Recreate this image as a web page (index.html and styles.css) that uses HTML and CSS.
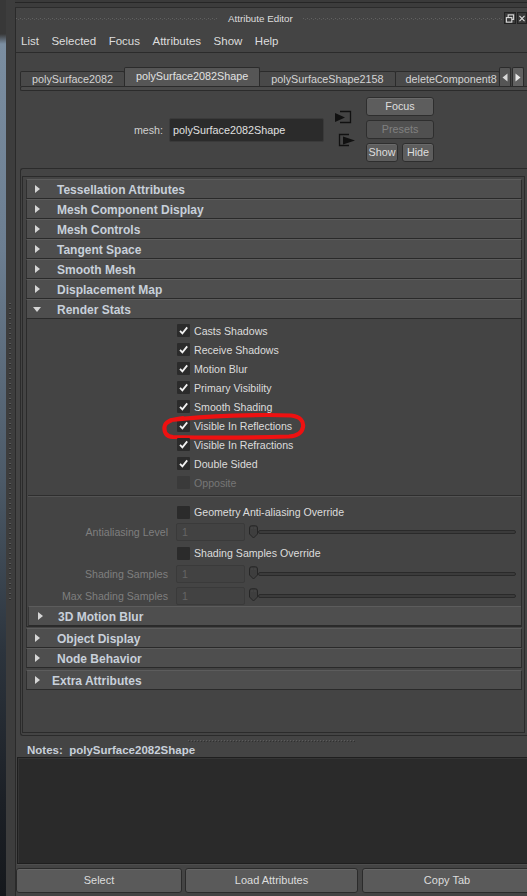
FILE: index.html
```html
<!DOCTYPE html>
<html>
<head>
<meta charset="utf-8">
<title>Attribute Editor</title>
<link rel="stylesheet" href="styles.css">
</head>
<body>
<div class="app">
  <div class="desk"></div>
  <div class="gutter"><div class="gutter-dots"></div></div>
  <div class="window">
    <div class="topedge"></div>
    <div class="titlebar">
      <div class="grip grip-left"></div>
      <div class="title">Attribute Editor</div>
      <div class="grip grip-right"></div>
      <div class="winbtn">
        <svg width="11" height="11" viewBox="0 0 11 11"><rect x="3.5" y="1.5" width="6" height="5" fill="none" stroke="#ddd" stroke-width="1.2"/><rect x="1.5" y="4.5" width="6" height="5" fill="#3a3a3a" stroke="#ddd" stroke-width="1.2"/></svg>
      </div>
      <div class="winbtn close">
        <svg width="11" height="11" viewBox="0 0 11 11"><path d="M2 2 L9 9 M9 2 L2 9" stroke="#ddd" stroke-width="1.5"/></svg>
      </div>
    </div>
    <div class="menubar">
      <span class="menu">List</span>
      <span class="menu">Selected</span>
      <span class="menu">Focus</span>
      <span class="menu">Attributes</span>
      <span class="menu">Show</span>
      <span class="menu">Help</span>
    </div>
    <div class="tabrow">
      <div class="tab">polySurface2082</div>
      <div class="tab active">polySurface2082Shape</div>
      <div class="tab">polySurfaceShape2158</div>
      <div class="tab clip">deleteComponent8</div>
      <div class="tabarrow">
        <svg width="6" height="9" viewBox="0 0 6 9"><path d="M5.5 0.5 L0.5 4.5 L5.5 8.5 Z" fill="#d8d8d8"/></svg>
      </div>
      <div class="tabarrow light">
        <svg width="6" height="9" viewBox="0 0 6 9"><path d="M0.5 0.5 L5.5 4.5 L0.5 8.5 Z" fill="#e8e8e8"/></svg>
      </div>
    </div>
    <div class="tabline"></div>
    <div class="nodebar">
      <div class="meshlabel">mesh:</div>
      <div class="meshfield">polySurface2082Shape</div>
      <svg class="nodeicons" width="22" height="38" viewBox="0 0 22 38">
        <path d="M6 1.5 H16.5 V12.5 H6" fill="none" stroke="#111" stroke-width="1.3"/>
        <path d="M1 3 L11 7.5 L1 12 Z" fill="#111"/>
        <path d="M15 24.5 H5.5 V35.5 H15" fill="none" stroke="#111" stroke-width="1.3"/>
        <path d="M9 26.5 L21 30.5 L9 34.5 Z" fill="#111"/>
      </svg>
      <div class="nodebtns">
        <div class="btn">Focus</div>
        <div class="btn disabled">Presets</div>
        <div class="btnpair">
          <div class="btn half">Show</div>
          <div class="btn half">Hide</div>
        </div>
      </div>
    </div>
    <div class="scrollouter">
      <div class="scrollinner">
        <div class="hdr"><span class="arrow"><span class="tri-r"></span></span>Tessellation Attributes</div>
        <div class="hdr"><span class="arrow"><span class="tri-r"></span></span>Mesh Component Display</div>
        <div class="hdr"><span class="arrow"><span class="tri-r"></span></span>Mesh Controls</div>
        <div class="hdr"><span class="arrow"><span class="tri-r"></span></span>Tangent Space</div>
        <div class="hdr"><span class="arrow"><span class="tri-r"></span></span>Smooth Mesh</div>
        <div class="hdr"><span class="arrow"><span class="tri-r"></span></span>Displacement Map</div>
        <div class="hdr"><span class="arrow down"><span class="tri-d"></span></span>Render Stats</div>
        <div class="rsbody">
          <div class="cbgroup">
            <div class="cb"><span class="box"><svg width="13" height="13" viewBox="0 0 13 13"><path d="M3 6.8 L5.4 9.3 L10.2 3.4" fill="none" stroke="#f2f2f2" stroke-width="1.8"/></svg></span>Casts Shadows</div>
            <div class="cb"><span class="box"><svg width="13" height="13" viewBox="0 0 13 13"><path d="M3 6.8 L5.4 9.3 L10.2 3.4" fill="none" stroke="#f2f2f2" stroke-width="1.8"/></svg></span>Receive Shadows</div>
            <div class="cb"><span class="box"><svg width="13" height="13" viewBox="0 0 13 13"><path d="M3 6.8 L5.4 9.3 L10.2 3.4" fill="none" stroke="#f2f2f2" stroke-width="1.8"/></svg></span>Motion Blur</div>
            <div class="cb"><span class="box"><svg width="13" height="13" viewBox="0 0 13 13"><path d="M3 6.8 L5.4 9.3 L10.2 3.4" fill="none" stroke="#f2f2f2" stroke-width="1.8"/></svg></span>Primary Visibility</div>
            <div class="cb"><span class="box"><svg width="13" height="13" viewBox="0 0 13 13"><path d="M3 6.8 L5.4 9.3 L10.2 3.4" fill="none" stroke="#f2f2f2" stroke-width="1.8"/></svg></span>Smooth Shading</div>
            <div class="cb circled"><span class="box"><svg width="13" height="13" viewBox="0 0 13 13"><path d="M3 6.8 L5.4 9.3 L10.2 3.4" fill="none" stroke="#f2f2f2" stroke-width="1.8"/></svg></span>Visible In Reflections
              <svg class="redmark" width="148" height="32" viewBox="0 0 148 32"><path d="M10 8 C 45 4, 100 2, 130 3.5 C 139 4.5, 143 9, 142 15 C 141 21, 137 24, 128 24.5 C 95 25.5, 45 26, 12 25 C 5 24.5, 3 20, 3.5 15 C 4 10, 9 7.5, 22 6" fill="none" stroke="#ee1111" stroke-width="4.2" stroke-linecap="round" stroke-linejoin="round"/></svg>
            </div>
            <div class="cb"><span class="box"><svg width="13" height="13" viewBox="0 0 13 13"><path d="M3 6.8 L5.4 9.3 L10.2 3.4" fill="none" stroke="#f2f2f2" stroke-width="1.8"/></svg></span>Visible In Refractions</div>
            <div class="cb"><span class="box"><svg width="13" height="13" viewBox="0 0 13 13"><path d="M3 6.8 L5.4 9.3 L10.2 3.4" fill="none" stroke="#f2f2f2" stroke-width="1.8"/></svg></span>Double Sided</div>
            <div class="cb off"><span class="box dim"></span>Opposite</div>
          </div>
          <div class="sep"></div>
          <div class="overrides">
            <div class="cb r20"><span class="box"></span>Geometry Anti-aliasing Override</div>
            <div class="srow r20">
              <div class="slabel">Antialiasing Level</div>
              <div class="sfield">1</div>
              <div class="slider"><svg class="handle" width="11" height="14" viewBox="0 0 11 14"><path d="M1.5 3 Q1.5 0.8 3.5 0.8 H7.5 Q9.5 0.8 9.5 3 V9 L5.5 13 L1.5 9 Z" fill="#3e3e3e" stroke="#262626" stroke-width="1"/><path d="M3.5 3 H4.5 M6.5 3 H7.5" stroke="#555" stroke-width="1"/></svg><div class="track"></div></div>
            </div>
            <div class="cb r20 mt1"><span class="box"></span>Shading Samples Override</div>
            <div class="srow r21">
              <div class="slabel">Shading Samples</div>
              <div class="sfield">1</div>
              <div class="slider"><svg class="handle" width="11" height="14" viewBox="0 0 11 14"><path d="M1.5 3 Q1.5 0.8 3.5 0.8 H7.5 Q9.5 0.8 9.5 3 V9 L5.5 13 L1.5 9 Z" fill="#3e3e3e" stroke="#262626" stroke-width="1"/><path d="M3.5 3 H4.5 M6.5 3 H7.5" stroke="#555" stroke-width="1"/></svg><div class="track"></div></div>
            </div>
            <div class="srow r21 mt1">
              <div class="slabel">Max Shading Samples</div>
              <div class="sfield">1</div>
              <div class="slider"><svg class="handle" width="11" height="14" viewBox="0 0 11 14"><path d="M1.5 3 Q1.5 0.8 3.5 0.8 H7.5 Q9.5 0.8 9.5 3 V9 L5.5 13 L1.5 9 Z" fill="#3e3e3e" stroke="#262626" stroke-width="1"/><path d="M3.5 3 H4.5 M6.5 3 H7.5" stroke="#555" stroke-width="1"/></svg><div class="track"></div></div>
            </div>
          </div>
          <div class="hdr sub"><span class="arrow sub"><span class="tri-r"></span></span>3D Motion Blur</div>
        </div>
        <div class="hdr mt1"><span class="arrow"><span class="tri-r"></span></span>Object Display</div>
        <div class="hdr"><span class="arrow"><span class="tri-r"></span></span>Node Behavior</div>
        <div class="hdr mt2"><span class="arrow extra"><span class="tri-r"></span></span>Extra Attributes</div>
      </div>
    </div>
    <div class="splitter"><div class="splitdots"></div></div>
    <div class="noteslabel">Notes:&nbsp; polySurface2082Shape</div>
    <div class="notes"></div>
    <div class="bottombar">
      <div class="bbtn b1">Select</div>
      <div class="bbtn b2">Load Attributes</div>
      <div class="bbtn b3">Copy Tab</div>
    </div>
  </div>
</div>
</body>
</html>
```

FILE: styles.css
```css
* { box-sizing: border-box; }
html, body { margin: 0; padding: 0; }
body {
  width: 527px;
  height: 896px;
  overflow: hidden;
  background: #444444;
  font-family: "Liberation Sans", Arial, sans-serif;
  color: #dddddd;
}
.app {
  display: flex;
  width: 527px;
  height: 896px;
  overflow: hidden;
}
.desk {
  width: 6px;
  flex: none;
  background: linear-gradient(to bottom, #383838 0, #383838 34px, #7b8ea1 44px, #6c7e91 250px, #4c5a68 480px, #2c343d 650px, #1c2026 800px, #15181c 896px);
}
.gutter {
  width: 9px;
  flex: none;
  background: #3d3d3d;
  padding-top: 303px;
}
.gutter-dots {
  margin-left: 3px;
  width: 2px;
  height: 300px;
  background: repeating-linear-gradient(to bottom, #5a5a5a 0 1px, #2c2c2c 1px 2px, transparent 2px 5px);
}
.window {
  flex: 1;
  min-width: 0;
  border-left: 1px solid #2a2a2a;
  display: flex;
  flex-direction: column;
  background: #444444;
}
.topedge {
  height: 8px;
  flex: none;
  background: #3c3c3c;
  border-top: 2px solid #3a3a3a;
  border-bottom: 1px solid #2c2c2c;
  box-shadow: inset 0 1px 0 #262626;
  margin-left: -1px;
}
.titlebar {
  height: 20px;
  flex: none;
  display: flex;
  align-items: center;
}
.grip {
  height: 2px;
  background-image:
    repeating-linear-gradient(90deg, #626262 0 1px, transparent 1px 4px),
    repeating-linear-gradient(90deg, transparent 0 2px, #5a5a5a 2px 3px, transparent 3px 4px);
  background-size: 100% 1px, 100% 1px;
  background-position: 0 0, 0 1px;
  background-repeat: no-repeat;
  margin-top: 1px;
}
.grip-left { width: 202px; }
.grip-right { flex: 1; }
.title {
  font-size: 9.8px;
  color: #dddddd;
  padding: 0 10px 0 10px;
  white-space: nowrap;
}
.winbtn {
  width: 12px;
  height: 12px;
  margin-left: 2px;
  border: 1px solid #222;
  background: #3a3a3a;
  display: flex;
  align-items: center;
  justify-content: center;
  flex: none;
}
.winbtn svg { display: block; }
.winbtn.close { margin-left: 1px; width: 10px; overflow: hidden; justify-content: flex-start; }
.menubar {
  height: 25px;
  flex: none;
  display: flex;
  align-items: center;
  gap: 12.5px;
  padding-left: 5px;
  padding-top: 2px;
  padding-bottom: 1px;
  font-size: 11.5px;
  color: #dddddd;
  border-bottom: 1px solid #2b2b2b;
}
.menu { white-space: nowrap; }
.tabrow {
  height: 33px;
  flex: none;
  display: flex;
  align-items: flex-end;
  padding-left: 4px;
  white-space: nowrap;
}
.tab {
  height: 15px;
  padding: 0 11px 0 11px;
  font-size: 10.8px;
  line-height: 14px;
  color: #d4d4d4;
  background: #494949;
  border: 1px solid #2b2b2b;
  border-bottom: 0;
  border-radius: 2px 2px 0 0;
  margin-right: -1px;
  flex: none;
}
.tab.active {
  height: 19px;
  line-height: 17px;
  padding: 0 11px 0 11px;
  background: #565656;
  color: #e2e2e2;
}
.tab.clip {
  width: 105px;
  overflow: hidden;
  padding-left: 10px;
}
.tabarrow {
  width: 12px;
  height: 19px;
  margin-left: 0;
  background: #555;
  border: 1px solid #2b2b2b;
  border-bottom: 0;
  border-radius: 2px 2px 0 0;
  display: flex;
  align-items: center;
  justify-content: center;
  flex: none;
}
.tabarrow.light { background: #626262; margin-left: 1px; }
.tabarrow svg { display: block; }
.tabline {
  height: 5px;
  flex: none;
  margin-left: 4px;
  border: 1px solid #2b2b2b;
  border-right: 0;
  border-radius: 2px 0 0 2px;
  background: #4b4b4b;
}
.nodebar {
  height: 77px;
  flex: none;
  display: flex;
  align-items: center;
}
.meshlabel {
  width: 153px;
  text-align: right;
  padding-right: 6px;
  font-size: 10.7px;
  color: #d0d0d0;
  flex: none;
}
.meshfield {
  width: 155px;
  height: 24px;
  flex: none;
  background: #2b2b2b;
  border: 1px solid #3a3a3a;
  border-radius: 2px;
  font-size: 10.8px;
  line-height: 22px;
  padding-left: 3px;
  color: #e0e0e0;
}
.nodeicons {
  display: block;
  margin-left: 10px;
  flex: none;
  margin-top: -2px;
}
.nodebtns {
  margin-left: 10px;
  width: 68px;
  display: flex;
  flex-direction: column;
  gap: 4px;
  flex: none;
}
.btn {
  height: 19px;
  background: #5d5d5d;
  border: 1px solid #2e2e2e;
  border-radius: 3px;
  box-shadow: inset 0 1px 0 #6a6a6a;
  font-size: 10.8px;
  line-height: 17px;
  text-align: center;
  color: #dddddd;
}
.btn.disabled {
  background: #505050;
  color: #808080;
  box-shadow: none;
}
.btnpair {
  display: flex;
  gap: 4px;
}
.btn.half { width: 32px; }
.scrollouter {
  height: 568px;
  flex: none;
  margin-left: 4px;
  border-top: 1px solid #2b2b2b;
  border-left: 1px solid #2b2b2b;
  border-bottom: 1px solid #2b2b2b;
  border-radius: 3px 0 0 3px;
  padding: 7px 0 2px 1px;
}
.scrollinner {
  height: 557px;
  border: 1px solid #2b2b2b;
  padding: 2px 2px 0 3px;
  width: 503px;
}
.hdr {
  height: 20px;
  display: flex;
  align-items: center;
  background: #4e4e4e;
  border-top: 1px solid #5c5c5c;
  border-bottom: 1px solid #2a2a2a;
  border-left: 1px solid #303030;
  border-right: 1px solid #2c2c2c;
  font-size: 12px;
  font-weight: bold;
  color: #c8d0da;
  white-space: nowrap;
  padding-top: 1px;
}
.hdr.mt1 { margin-top: 1px; }
.hdr.mt2 { margin-top: 2px; }
.arrow {
  width: 30px;
  padding-left: 8px;
  display: flex;
  align-items: center;
  flex: none;
  margin-top: -2px;
}
.arrow.down { padding-left: 6px; }
.arrow.extra { width: 25px; }
.arrow.sub { width: 29px; padding-left: 9px; }
.tri-r {
  width: 0;
  height: 0;
  border-left: 5px solid #d6d6d6;
  border-top: 4.5px solid transparent;
  border-bottom: 4.5px solid transparent;
}
.tri-d {
  width: 0;
  height: 0;
  border-top: 5px solid #d6d6d6;
  border-left: 4.5px solid transparent;
  border-right: 4.5px solid transparent;
  margin-top: 2px;
}
.rsbody {
  border: 1px solid #2b2b2b;
  border-top: 0;
  background: #444444;
}
.cbgroup { padding-top: 2px; }
.cb {
  height: 19px;
  display: flex;
  align-items: center;
  padding-left: 150px;
  font-size: 10.6px;
  color: #dcdcdc;
  white-space: nowrap;
  position: relative;
}
.cb.r20 { height: 20px; }
.cb.mt1 { margin-top: 1px; }
.cb.off { color: #767676; }
.box {
  width: 13px;
  height: 13px;
  flex: none;
  background: #2b2b2b;
  border-radius: 1px;
  margin-right: 4px;
  display: block;
}
.box svg { display: block; }
.box.dim { background: #3a3a3a; }
.redmark {
  position: absolute;
  left: 134px;
  top: -4px;
  pointer-events: none;
}
.sep {
  margin: 3px 0 0 1px;
  height: 2px;
  border-top: 1px solid #2e2e2e;
  border-bottom: 1px solid #535353;
}
.overrides { padding-top: 5px; }
.srow {
  display: flex;
  align-items: center;
}
.srow.r20 { height: 20px; }
.srow.r21 { height: 21px; }
.srow.mt1 { margin-top: 1px; }
.slabel {
  width: 149px;
  flex: none;
  text-align: right;
  padding-right: 8px;
  font-size: 10.6px;
  color: #7f7f7f;
  white-space: nowrap;
}
.sfield {
  width: 69px;
  height: 18px;
  flex: none;
  border: 1px solid #3a3a3a;
  border-radius: 2px;
  background: #424242;
  font-size: 10.6px;
  line-height: 17px;
  padding-left: 5px;
  color: #656565;
}
.slider {
  margin-left: 3px;
  width: 268px;
  display: flex;
  align-items: center;
  flex: none;
}
.handle { display: block; flex: none; margin-top: -1px; }
.track {
  flex: 1;
  height: 4px;
  border: 1px solid #2a2a2a;
  border-radius: 2px;
  background: #3b3b3b;
  margin-left: -1px;
}
.hdr.sub {
  margin-left: 1px;
  border-right: 0;
  border-left: 1px solid #363636;
}
.splitter {
  height: 8px;
  flex: none;
  padding-top: 4px;
}
.splitdots {
  margin-left: 172px;
  width: 167px;
  height: 2px;
  background-image:
    repeating-linear-gradient(90deg, #5c5c5c 0 1px, transparent 1px 3px),
    repeating-linear-gradient(90deg, #303030 0 1px, transparent 1px 3px);
  background-size: 100% 1px, 100% 1px;
  background-position: 0 0, 1px 1px;
  background-repeat: no-repeat;
}
.noteslabel {
  height: 13px;
  flex: none;
  padding-left: 11px;
  font-size: 11.5px;
  font-weight: bold;
  color: #c8d0da;
  line-height: 12px;
  white-space: nowrap;
}
.notes {
  height: 107px;
  flex: none;
  margin-left: 1px;
  background: #2a2a2a;
  border: 1px solid #1f1f1f;
  border-right: 0;
  box-shadow: inset 1px 1px 0 #353535, 0 1px 0 #4e4e4e;
}
.bottombar {
  height: 32px;
  flex: none;
  display: flex;
  padding-top: 4px;
  white-space: nowrap;
}
.bbtn {
  height: 25px;
  flex: none;
  background: #5a5a5a;
  border: 1px solid #2b2b2b;
  border-radius: 3px;
  box-shadow: inset 0 1px 0 #666;
  font-size: 11px;
  line-height: 23px;
  text-align: center;
  color: #dddddd;
}
.b1 { width: 166px; }
.b2 { width: 173px; margin-left: 3px; }
.b3 { width: 170px; margin-left: 4px; }
```
